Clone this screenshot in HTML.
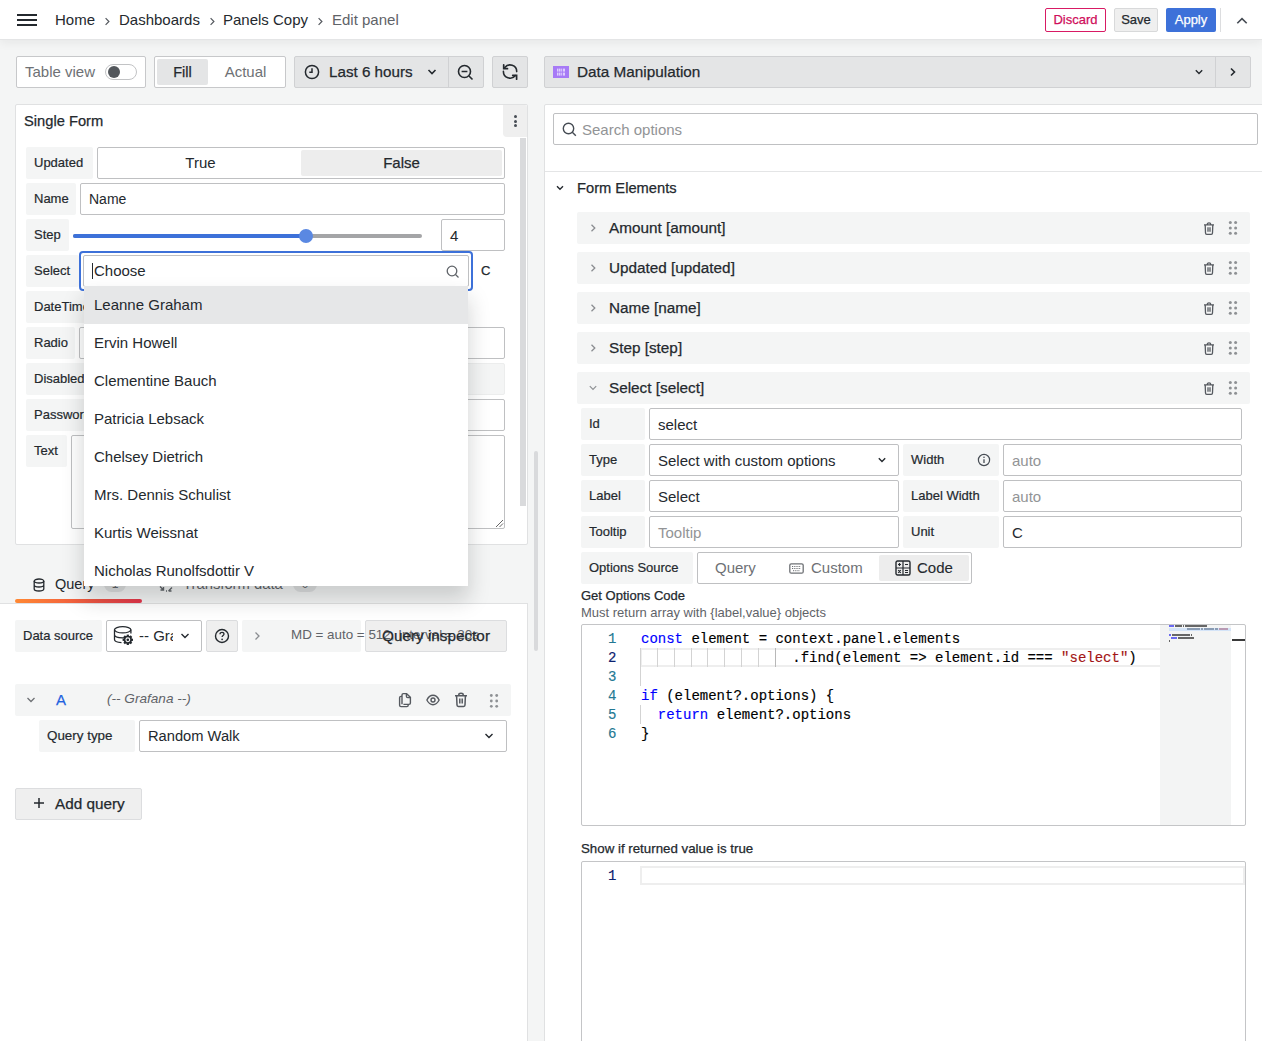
<!DOCTYPE html>
<html><head><meta charset="utf-8">
<style>
*{box-sizing:border-box;margin:0;padding:0}
html,body{width:1262px;height:1041px;overflow:hidden}
body{background:#f4f5f5;font-family:"Liberation Sans",sans-serif;color:#24292e;position:relative;font-size:14px}
.a{position:absolute}
.hdr{left:0;top:0;width:1262px;height:40px;background:#fff;border-bottom:1px solid #e4e5e6;box-shadow:0 2px 10px rgba(24,26,27,0.07)}
.bc{top:0;height:40px;line-height:40px;font-size:15px;white-space:nowrap}
.sep{width:5px;height:8px}
.btn{height:24px;line-height:22px;border-radius:2px;font-size:13px;text-align:center;white-space:nowrap;-webkit-text-stroke:0.25px currentColor}
.tb{height:32px;border:1px solid #d0d1d3;background:#e4e5e6;border-radius:2px}
.panel{background:#fff;border:1px solid #e0e1e2;border-radius:2px}
.lbl{height:32px;line-height:32px;background:#f4f5f5;border-radius:2px;font-size:13px;-webkit-text-stroke:0.2px currentColor;padding-left:8px;white-space:nowrap;overflow:hidden}
.inp{height:32px;line-height:31px;background:#fff;border:1px solid #bfc0c2;border-radius:2px;font-size:15px;padding-left:8px;white-space:nowrap;overflow:hidden}
.ph{color:#929496}
.row{height:32px;background:#f4f5f5;border-radius:2px}
.rt{font-size:14px;font-weight:700;line-height:32px;white-space:nowrap}
svg{display:block}
.m{-webkit-text-stroke:0.25px currentColor}
.code{font-family:"Liberation Mono",monospace;font-size:14px;line-height:19px;white-space:pre;-webkit-text-stroke:0.15px currentColor}
</style></head><body>

<!-- HEADER -->
<div class="a hdr"></div>
<div class="a" style="left:17px;top:14px;width:20px;height:2px;background:#24292e"></div>
<div class="a" style="left:17px;top:19px;width:20px;height:2px;background:#24292e"></div>
<div class="a" style="left:17px;top:24px;width:20px;height:2px;background:#24292e"></div>
<div class="a bc" style="left:55px">Home</div>
<svg class="a" style="left:104px;top:17px" width="7" height="9" viewBox="0 0 7 9"><path d="M1.6 1.2 L4.9 4.5 L1.6 7.8" fill="none" stroke="#55595f" stroke-width="1.2"/></svg>
<div class="a bc" style="left:119px">Dashboards</div>
<svg class="a" style="left:209px;top:17px" width="7" height="9" viewBox="0 0 7 9"><path d="M1.6 1.2 L4.9 4.5 L1.6 7.8" fill="none" stroke="#55595f" stroke-width="1.2"/></svg>
<div class="a bc" style="left:223px">Panels Copy</div>
<svg class="a" style="left:317px;top:17px" width="7" height="9" viewBox="0 0 7 9"><path d="M1.6 1.2 L4.9 4.5 L1.6 7.8" fill="none" stroke="#55595f" stroke-width="1.2"/></svg>
<div class="a bc" style="left:332px;color:#5f6368">Edit panel</div>

<div class="a btn" style="left:1045px;top:8px;width:61px;border:1px solid #d81a64;color:#cf0e5b;background:#fff">Discard</div>
<div class="a btn" style="left:1114px;top:8px;width:44px;border:1px solid #d8d9da;background:#efefef;">Save</div>
<div class="a btn" style="left:1166px;top:8px;width:50px;background:#3d71d9;color:#fff;line-height:24px">Apply</div>
<div class="a" style="left:1220px;top:8px;width:1px;height:24px;background:#dcdddf"></div>
<svg class="a" style="left:1235px;top:15px" width="14" height="10" viewBox="0 0 14 10"><path d="M2.3 8.3 L7 3.6 L11.7 8.3" fill="none" stroke="#464c54" stroke-width="1.6"/></svg>

<!-- TOOLBAR -->
<div class="a" style="left:16px;top:56px;width:130px;height:32px;background:#fff;border:1px solid #c7c8ca;border-radius:2px"></div>
<div class="a" style="left:25px;top:56px;line-height:32px;color:#6e7175;font-size:15px">Table view</div>
<div class="a" style="left:105px;top:64px;width:32px;height:16px;border:1px solid #c2c3c5;border-radius:8px;background:#fff"></div>
<div class="a" style="left:108px;top:66px;width:12px;height:12px;border-radius:6px;background:#53575c"></div>

<div class="a" style="left:154px;top:56px;width:132px;height:32px;background:#fff;border:1px solid #c7c8ca;border-radius:2px"></div>
<div class="a" style="left:157px;top:59px;width:51px;height:26px;background:#e4e5e6;border-radius:2px"></div>
<div class="a" style="left:157px;top:56px;width:51px;line-height:32px;text-align:center;font-size:14.5px;-webkit-text-stroke:0.25px #24292e">Fill</div>
<div class="a" style="left:208px;top:56px;width:75px;line-height:32px;text-align:center;color:#6e7175;font-size:15px">Actual</div>

<div class="a tb" style="left:294px;top:56px;width:190px"></div>
<div class="a" style="left:448px;top:57px;width:1px;height:30px;background:#d0d1d3"></div>
<svg class="a" style="left:304px;top:64px" width="16" height="16" viewBox="0 0 16 16"><circle cx="8" cy="8" r="6.6" fill="none" stroke="#24292e" stroke-width="1.5"/><path d="M8 4.2 V8.3 H5.3" fill="none" stroke="#24292e" stroke-width="1.5"/></svg>
<div class="a m" style="left:329px;top:56px;line-height:32px;font-size:15.2px">Last 6 hours</div>
<svg class="a" style="left:427px;top:68px" width="10" height="8" viewBox="0 0 10 8"><path d="M1.5 2 L5 5.5 L8.5 2" fill="none" stroke="#24292e" stroke-width="1.6"/></svg>
<svg class="a" style="left:457px;top:64px" width="17" height="17" viewBox="0 0 17 17"><circle cx="7.5" cy="7.5" r="6" fill="none" stroke="#24292e" stroke-width="1.6"/><path d="M4.6 7.5 H10.4 M12 12 L15.5 15.5" fill="none" stroke="#24292e" stroke-width="1.6"/></svg>
<div class="a tb" style="left:492px;top:56px;width:36px"></div>
<svg class="a" style="left:501px;top:63px" width="18" height="18" viewBox="0 0 18 18"><path d="M3.8 4.6 A6.6 6.6 0 0 1 15.7 8.6 M2.4 8.4 A6.7 6.7 0 0 0 14.4 12.6" fill="none" stroke="#24292e" stroke-width="1.6" stroke-linecap="round"/><path d="M2.7 1.8 V5.7 H6.5 M11.7 12.4 H15.6 V16.2" fill="none" stroke="#24292e" stroke-width="1.7" stroke-linecap="round"/></svg>

<div class="a tb" style="left:544px;top:56px;width:707px"></div>
<div class="a" style="left:1215px;top:57px;width:1px;height:30px;background:#d0d1d3"></div>
<svg class="a" style="left:553px;top:66px" width="16" height="12" viewBox="0 0 16 12"><rect width="16" height="12" fill="#a77af6"/><g fill="#e6d8ff" opacity="0.9"><rect x="4" y="2.6" width="1" height="3"/><rect x="5.5" y="2.6" width="2" height="3"/><rect x="8.2" y="2.6" width="1" height="3"/><rect x="10" y="2.6" width="2" height="3"/><rect x="4" y="6.6" width="1" height="3"/><rect x="5.5" y="6.6" width="2" height="3"/><rect x="8.2" y="6.6" width="1" height="3"/><rect x="10" y="6.6" width="2" height="3"/></g></svg>
<div class="a m" style="left:577px;top:56px;line-height:32px;font-size:15.3px">Data Manipulation</div>
<svg class="a" style="left:1194px;top:68px" width="10" height="8" viewBox="0 0 10 8"><path d="M1.8 2.2 L5 5.4 L8.2 2.2" fill="none" stroke="#24292e" stroke-width="1.4"/></svg>
<svg class="a" style="left:1229px;top:67px" width="8" height="10" viewBox="0 0 8 10"><path d="M2 1.5 L5.5 5 L2 8.5" fill="none" stroke="#24292e" stroke-width="1.6"/></svg>

<!-- LEFT PANEL -->
<div class="a panel" style="left:15px;top:104px;width:513px;height:441px"></div>
<div class="a m" style="left:24px;top:105px;line-height:33px;font-size:14.7px">Single Form</div>
<div class="a" style="left:503px;top:105px;width:24px;height:32px;background:#efefef;border-radius:0 2px 0 4px"></div>
<div class="a" style="left:513.5px;top:114.5px;width:3px;height:3px;border-radius:2px;background:#464c54"></div>
<div class="a" style="left:513.5px;top:119.5px;width:3px;height:3px;border-radius:2px;background:#464c54"></div>
<div class="a" style="left:513.5px;top:124px;width:3px;height:3px;border-radius:2px;background:#464c54"></div>
<div class="a" style="left:520px;top:138px;width:6px;height:368px;background:#d9dadc"></div>

<div class="a lbl" style="left:26px;top:147px;width:67px">Updated</div>
<div class="a" style="left:97px;top:147px;width:408px;height:32px;border:1px solid #bfc0c2;border-radius:2px;background:#fff"></div>
<div class="a" style="left:301px;top:150px;width:201px;height:26px;background:#ededed;border-radius:2px"></div>
<div class="a" style="left:100px;top:147px;width:201px;line-height:32px;text-align:center;font-size:15px">True</div>
<div class="a" style="left:301px;top:147px;width:201px;line-height:32px;text-align:center;font-size:15px;-webkit-text-stroke:0.25px #24292e">False</div>

<div class="a lbl" style="left:26px;top:183px;width:50px">Name</div>
<div class="a inp" style="left:80px;top:183px;width:425px;padding-left:8px;font-size:14px">Name</div>

<div class="a lbl" style="left:26px;top:219px;width:43px">Step</div>
<div class="a" style="left:73px;top:234px;width:349px;height:4px;border-radius:2px;background:#a4a5a7"></div>
<div class="a" style="left:73px;top:234px;width:233px;height:4px;border-radius:2px;background:#3d71d9"></div>
<div class="a" style="left:299px;top:229px;width:14px;height:14px;border-radius:7px;background:#5a88e2"></div>
<div class="a inp" style="left:441px;top:219px;width:64px">4</div>

<div class="a lbl" style="left:26px;top:255px;width:53px">Select</div>
<div class="a" style="left:79px;top:251px;width:394px;height:40px;border:2px solid #3d71d9;border-radius:4px;background:#fff"></div>
<div class="a" style="left:83px;top:255px;width:386px;height:32px;border:1px solid #bfc0c2;border-radius:2px;background:#fff"></div>
<div class="a" style="left:92px;top:263px;width:1px;height:16px;background:#24292e"></div>
<div class="a" style="left:94px;top:255px;line-height:32px;font-size:15px">Choose</div>
<svg class="a" style="left:446px;top:265px" width="14" height="14" viewBox="0 0 14 14"><circle cx="6" cy="6" r="4.8" fill="none" stroke="#5f6368" stroke-width="1.3"/><path d="M9.5 9.5 L12.5 12.5" stroke="#5f6368" stroke-width="1.3"/></svg>
<div class="a m" style="left:481px;top:255px;line-height:32px;font-size:13px">C</div>

<div class="a lbl" style="left:26px;top:291px;width:70px">DateTime</div>

<div class="a lbl" style="left:26px;top:327px;width:49px">Radio</div>
<div class="a inp" style="left:79px;top:327px;width:426px"></div>

<div class="a lbl" style="left:26px;top:363px;width:66px">Disabled</div>
<div class="a" style="left:96px;top:363px;width:409px;height:32px;background:#f4f5f5;border:1px solid #eceded;border-radius:2px"></div>

<div class="a lbl" style="left:26px;top:399px;width:73px">Password</div>
<div class="a inp" style="left:103px;top:399px;width:402px"></div>

<div class="a lbl" style="left:26px;top:435px;width:41px">Text</div>
<div class="a" style="left:71px;top:435px;width:434px;height:94px;border:1px solid #bfc0c2;border-radius:2px;background:#fff"></div>
<svg class="a" style="left:495px;top:519px" width="9" height="9" viewBox="0 0 9 9"><path d="M1 8 L8 1 M4.5 8 L8 4.5" stroke="#555" stroke-width="0.9"/></svg>

<!-- TABS -->
<svg class="a" style="left:33px;top:578px" width="12" height="14" viewBox="0 0 12 14"><ellipse cx="6" cy="3" rx="4.8" ry="2" fill="none" stroke="#24292e" stroke-width="1.3"/><path d="M1.2 3 V11 C1.2 12.2 3.3 13 6 13 C8.7 13 10.8 12.2 10.8 11 V3 M1.2 7 C1.2 8.2 3.3 9 6 9 C8.7 9 10.8 8.2 10.8 7" fill="none" stroke="#24292e" stroke-width="1.3"/></svg>
<div class="a" style="left:55px;top:572px;line-height:24px;font-size:14.5px">Query</div>
<div class="a" style="left:104px;top:577px;width:22px;height:15px;border-radius:8px;background:#dfe0e1;font-size:12px;line-height:15px;text-align:center;color:#5f6368">1</div>
<svg class="a" style="left:158px;top:577px" width="16" height="16" viewBox="0 0 16 16"><path d="M2 9.5 L5.5 13 M5.5 10 V13 H2.5 M14 10.5 L10.5 14 M10.5 14 H13.5 M8 14 H9" fill="none" stroke="#5f6368" stroke-width="1.4"/></svg>
<div class="a" style="left:183px;top:572px;line-height:24px;font-size:14.8px;color:#5f6368">Transform data</div>
<div class="a" style="left:293px;top:577px;width:24px;height:15px;border-radius:8px;background:#dfe0e1;font-size:12px;line-height:15px;text-align:center;color:#5f6368">0</div>
<div class="a" style="left:15px;top:599px;width:127px;height:4px;border-radius:2px;background:linear-gradient(90deg,#ff8833,#e3344a)"></div>

<!-- QUERY PANE -->
<div class="a panel" style="left:-2px;top:603px;width:530px;height:460px;border-radius:0"></div>
<div class="a lbl" style="left:15px;top:620px;width:87px">Data source</div>
<div class="a inp" style="left:106px;top:620px;width:96px"></div>
<svg class="a" style="left:113px;top:625px" width="22" height="22" viewBox="0 0 22 22"><ellipse cx="9.7" cy="4.8" rx="8.2" ry="3.1" fill="none" stroke="#24292e" stroke-width="1.3"/><path d="M1.5 4.8 V14.5 C1.5 16.2 4.5 17.4 8.5 17.6 M17.9 4.8 V8.5 M1.5 9.8 C1.5 11.5 5 12.8 9.7 12.8 C10.5 12.8 11.2 12.8 11.8 12.7" fill="none" stroke="#24292e" stroke-width="1.3"/><g fill="#24292e"><rect x="13.7" y="9.6" width="2.2" height="10.4" transform="rotate(0 14.8 14.8)"/><rect x="13.7" y="9.6" width="2.2" height="10.4" transform="rotate(45 14.8 14.8)"/><rect x="13.7" y="9.6" width="2.2" height="10.4" transform="rotate(90 14.8 14.8)"/><rect x="13.7" y="9.6" width="2.2" height="10.4" transform="rotate(135 14.8 14.8)"/><circle cx="14.8" cy="14.8" r="4.1"/></g><circle cx="14.8" cy="14.8" r="1.9" fill="none" stroke="#fff" stroke-width="1.1"/></svg>
<div class="a" style="left:139px;top:620px;width:34px;line-height:32px;font-size:15px;overflow:hidden;white-space:nowrap">-- Grafana --</div>
<svg class="a" style="left:180px;top:632px" width="10" height="8" viewBox="0 0 10 8"><path d="M1.5 2 L5 5.5 L8.5 2" fill="none" stroke="#24292e" stroke-width="1.4"/></svg>
<div class="a" style="left:206px;top:620px;width:32px;height:32px;background:#efefef;border:1px solid #dcdddf;border-radius:2px"></div>
<svg class="a" style="left:214px;top:628px" width="16" height="16" viewBox="0 0 16 16"><circle cx="8" cy="8" r="6.5" fill="none" stroke="#24292e" stroke-width="1.4"/><path d="M6 6.2 C6 4.9 7 4.3 8 4.3 C9.1 4.3 10 5 10 6.1 C10 7.5 8.1 7.5 8.1 9" fill="none" stroke="#24292e" stroke-width="1.3"/><circle cx="8.1" cy="11.3" r="0.85" fill="#24292e"/></svg>
<div class="a" style="left:242px;top:620px;width:119px;height:32px;background:#f4f5f5;border-radius:2px"></div>
<svg class="a" style="left:254px;top:631px" width="7" height="10" viewBox="0 0 7 10"><path d="M1.5 1.5 L5 5 L1.5 8.5" fill="none" stroke="#8a8d91" stroke-width="1.3"/></svg>
<div class="a" style="left:365px;top:620px;width:142px;height:32px;background:#efefef;border:1px solid #dcdddf;border-radius:2px"></div>
<div class="a" style="left:291px;top:620px;line-height:30px;font-size:13.4px;color:#5f6368;white-space:nowrap">MD = auto = 512, Interval = 20s</div>
<div class="a" style="left:365px;top:620px;width:142px;line-height:32px;text-align:center;font-size:15.3px;-webkit-text-stroke:0.25px #24292e;color:#24292e">Query inspector</div>

<div class="a" style="left:15px;top:684px;width:496px;height:32px;background:#f4f5f5;border-radius:2px"></div>
<svg class="a" style="left:26px;top:696px" width="10" height="8" viewBox="0 0 10 8"><path d="M1.5 2 L5 5.5 L8.5 2" fill="none" stroke="#6e7175" stroke-width="1.3"/></svg>
<div class="a" style="left:56px;top:684px;line-height:32px;font-size:15px;-webkit-text-stroke:0.25px #1f62e0;color:#1f62e0">A</div>
<div class="a" style="left:107px;top:684px;line-height:30px;font-size:13.6px;font-style:italic;color:#5f6368">(-- Grafana --)</div>
<svg class="a" style="left:398px;top:692px" width="14" height="16" viewBox="0 0 14 16"><path d="M4 12.2 V3 C4 2.2 4.6 1.6 5.4 1.6 H8.6 L12.4 5.4 V11 C12.4 11.8 11.8 12.4 11 12.4 H5.4 M8.4 1.8 V4.2 C8.4 5 9 5.6 9.8 5.6 H12.2 M4 4.4 H3 C2.2 4.4 1.6 5 1.6 5.8 V13.2 C1.6 14 2.2 14.6 3 14.6 H8.8 C9.6 14.6 10.2 14 10.2 13.2 V12.4" fill="none" stroke="#55595f" stroke-width="1.4"/></svg>
<svg class="a" style="left:426px;top:694px" width="14" height="12" viewBox="0 0 14 12"><path d="M0.9 6 C2.6 2.6 4.8 1.3 7 1.3 C9.2 1.3 11.4 2.6 13.1 6 C11.4 9.4 9.2 10.7 7 10.7 C4.8 10.7 2.6 9.4 0.9 6 Z" fill="none" stroke="#55595f" stroke-width="1.4"/><circle cx="7" cy="6" r="2" fill="none" stroke="#55595f" stroke-width="1.4"/></svg>
<svg class="a" style="left:454px;top:692px" width="14" height="16" viewBox="0 0 14 16"><path d="M1 3.8 H13 M4.8 3.8 V2.8 C4.8 1.8 5.6 1.2 7 1.2 C8.4 1.2 9.2 1.8 9.2 2.8 V3.8 M2.6 3.8 L3 13 C3 13.8 3.6 14.4 4.4 14.4 H9.6 C10.4 14.4 11 13.8 11 13 L11.4 3.8 M5.8 6.6 V11.4 M8.2 6.6 V11.4" fill="none" stroke="#55595f" stroke-width="1.5"/></svg>
<svg class="a" style="left:488px;top:693px" width="12" height="16" viewBox="0 0 12 16"><g fill="#8e9194"><circle cx="3.3" cy="2.5" r="1.4"/><circle cx="8.7" cy="2.5" r="1.4"/><circle cx="3.3" cy="8" r="1.4"/><circle cx="8.7" cy="8" r="1.4"/><circle cx="3.3" cy="13.3" r="1.4"/><circle cx="8.7" cy="13.3" r="1.4"/></g></svg>

<div class="a lbl" style="left:39px;top:720px;width:96px;font-size:13.4px">Query type</div>
<div class="a inp" style="left:139px;top:720px;width:368px;font-size:14.7px">Random Walk</div>
<svg class="a" style="left:484px;top:732px" width="10" height="8" viewBox="0 0 10 8"><path d="M1.5 2 L5 5.5 L8.5 2" fill="none" stroke="#24292e" stroke-width="1.4"/></svg>

<div class="a" style="left:15px;top:788px;width:127px;height:32px;background:#efefef;border:1px solid #dcdddf;border-radius:2px"></div>
<svg class="a" style="left:33px;top:797px" width="12" height="12" viewBox="0 0 12 12"><path d="M6 1 V11 M1 6 H11" stroke="#24292e" stroke-width="1.5"/></svg>
<div class="a m" style="left:55px;top:788px;line-height:32px;font-size:15.3px">Add query</div>

<div class="a" style="left:534px;top:451px;width:4px;height:200px;border-radius:2px;background:#d9dadc"></div>

<!-- RIGHT PANE -->
<div class="a panel" style="left:544px;top:104px;width:740px;height:960px"></div>
<div class="a inp" style="left:553px;top:113px;width:705px"></div>
<svg class="a" style="left:561.5px;top:122px" width="15" height="15" viewBox="0 0 15 15"><circle cx="6.5" cy="6.5" r="5.2" fill="none" stroke="#464c54" stroke-width="1.4"/><path d="M10.3 10.3 L13.8 13.8" stroke="#464c54" stroke-width="1.4"/></svg>
<div class="a ph" style="left:582px;top:114px;line-height:32px;font-size:15px">Search options</div>
<div class="a" style="left:545px;top:171px;width:720px;height:1px;background:#e4e5e6"></div>
<svg class="a" style="left:555px;top:184px" width="10" height="8" viewBox="0 0 10 8"><path d="M2 2.2 L5 5.2 L8 2.2" fill="none" stroke="#24292e" stroke-width="1.4"/></svg>
<div class="a m" style="left:577px;top:172px;line-height:33px;font-size:14.7px">Form Elements</div>
<div class="a row" style="left:577px;top:212px;width:673px"></div>
<svg class="a" style="left:589px;top:223px" width="8" height="10" viewBox="0 0 8 10"><path d="M2.5 1.8 L5.8 5 L2.5 8.2" fill="none" stroke="#8a8d91" stroke-width="1.3"/></svg>
<div class="a m" style="left:609px;top:212px;line-height:32px;font-size:15.3px">Amount [amount]</div>
<svg class="a" style="left:1202px;top:221px" width="14" height="15" viewBox="0 0 14 15"><path d="M2 3.9 H12 M5.3 3.9 V3.2 C5.3 2.3 6 1.8 7 1.8 C8 1.8 8.7 2.3 8.7 3.2 V3.9 M3.2 3.9 L3.5 12 C3.5 12.8 4 13.3 4.8 13.3 H9.2 C10 13.3 10.5 12.8 10.5 12 L10.8 3.9 M6 6.3 V10.7 M8 6.3 V10.7" fill="none" stroke="#55595f" stroke-width="1.3"/></svg>
<svg class="a" style="left:1227px;top:220px" width="12" height="16" viewBox="0 0 12 16"><g fill="#8e9194"><circle cx="3.3" cy="2.6" r="1.5"/><circle cx="8.6" cy="2.6" r="1.5"/><circle cx="3.3" cy="8" r="1.5"/><circle cx="8.6" cy="8" r="1.5"/><circle cx="3.3" cy="13.3" r="1.5"/><circle cx="8.6" cy="13.3" r="1.5"/></g></svg>
<div class="a row" style="left:577px;top:252px;width:673px"></div>
<svg class="a" style="left:589px;top:263px" width="8" height="10" viewBox="0 0 8 10"><path d="M2.5 1.8 L5.8 5 L2.5 8.2" fill="none" stroke="#8a8d91" stroke-width="1.3"/></svg>
<div class="a m" style="left:609px;top:252px;line-height:32px;font-size:15.3px">Updated [updated]</div>
<svg class="a" style="left:1202px;top:261px" width="14" height="15" viewBox="0 0 14 15"><path d="M2 3.9 H12 M5.3 3.9 V3.2 C5.3 2.3 6 1.8 7 1.8 C8 1.8 8.7 2.3 8.7 3.2 V3.9 M3.2 3.9 L3.5 12 C3.5 12.8 4 13.3 4.8 13.3 H9.2 C10 13.3 10.5 12.8 10.5 12 L10.8 3.9 M6 6.3 V10.7 M8 6.3 V10.7" fill="none" stroke="#55595f" stroke-width="1.3"/></svg>
<svg class="a" style="left:1227px;top:260px" width="12" height="16" viewBox="0 0 12 16"><g fill="#8e9194"><circle cx="3.3" cy="2.6" r="1.5"/><circle cx="8.6" cy="2.6" r="1.5"/><circle cx="3.3" cy="8" r="1.5"/><circle cx="8.6" cy="8" r="1.5"/><circle cx="3.3" cy="13.3" r="1.5"/><circle cx="8.6" cy="13.3" r="1.5"/></g></svg>
<div class="a row" style="left:577px;top:292px;width:673px"></div>
<svg class="a" style="left:589px;top:303px" width="8" height="10" viewBox="0 0 8 10"><path d="M2.5 1.8 L5.8 5 L2.5 8.2" fill="none" stroke="#8a8d91" stroke-width="1.3"/></svg>
<div class="a m" style="left:609px;top:292px;line-height:32px;font-size:15.3px">Name [name]</div>
<svg class="a" style="left:1202px;top:301px" width="14" height="15" viewBox="0 0 14 15"><path d="M2 3.9 H12 M5.3 3.9 V3.2 C5.3 2.3 6 1.8 7 1.8 C8 1.8 8.7 2.3 8.7 3.2 V3.9 M3.2 3.9 L3.5 12 C3.5 12.8 4 13.3 4.8 13.3 H9.2 C10 13.3 10.5 12.8 10.5 12 L10.8 3.9 M6 6.3 V10.7 M8 6.3 V10.7" fill="none" stroke="#55595f" stroke-width="1.3"/></svg>
<svg class="a" style="left:1227px;top:300px" width="12" height="16" viewBox="0 0 12 16"><g fill="#8e9194"><circle cx="3.3" cy="2.6" r="1.5"/><circle cx="8.6" cy="2.6" r="1.5"/><circle cx="3.3" cy="8" r="1.5"/><circle cx="8.6" cy="8" r="1.5"/><circle cx="3.3" cy="13.3" r="1.5"/><circle cx="8.6" cy="13.3" r="1.5"/></g></svg>
<div class="a row" style="left:577px;top:332px;width:673px"></div>
<svg class="a" style="left:589px;top:343px" width="8" height="10" viewBox="0 0 8 10"><path d="M2.5 1.8 L5.8 5 L2.5 8.2" fill="none" stroke="#8a8d91" stroke-width="1.3"/></svg>
<div class="a m" style="left:609px;top:332px;line-height:32px;font-size:15.3px">Step [step]</div>
<svg class="a" style="left:1202px;top:341px" width="14" height="15" viewBox="0 0 14 15"><path d="M2 3.9 H12 M5.3 3.9 V3.2 C5.3 2.3 6 1.8 7 1.8 C8 1.8 8.7 2.3 8.7 3.2 V3.9 M3.2 3.9 L3.5 12 C3.5 12.8 4 13.3 4.8 13.3 H9.2 C10 13.3 10.5 12.8 10.5 12 L10.8 3.9 M6 6.3 V10.7 M8 6.3 V10.7" fill="none" stroke="#55595f" stroke-width="1.3"/></svg>
<svg class="a" style="left:1227px;top:340px" width="12" height="16" viewBox="0 0 12 16"><g fill="#8e9194"><circle cx="3.3" cy="2.6" r="1.5"/><circle cx="8.6" cy="2.6" r="1.5"/><circle cx="3.3" cy="8" r="1.5"/><circle cx="8.6" cy="8" r="1.5"/><circle cx="3.3" cy="13.3" r="1.5"/><circle cx="8.6" cy="13.3" r="1.5"/></g></svg>
<div class="a row" style="left:577px;top:372px;width:673px"></div>
<svg class="a" style="left:588px;top:384px" width="10" height="8" viewBox="0 0 10 8"><path d="M1.8 2.2 L5 5.4 L8.2 2.2" fill="none" stroke="#8e9194" stroke-width="1.2"/></svg>
<div class="a m" style="left:609px;top:372px;line-height:32px;font-size:15.3px">Select [select]</div>
<svg class="a" style="left:1202px;top:381px" width="14" height="15" viewBox="0 0 14 15"><path d="M2 3.9 H12 M5.3 3.9 V3.2 C5.3 2.3 6 1.8 7 1.8 C8 1.8 8.7 2.3 8.7 3.2 V3.9 M3.2 3.9 L3.5 12 C3.5 12.8 4 13.3 4.8 13.3 H9.2 C10 13.3 10.5 12.8 10.5 12 L10.8 3.9 M6 6.3 V10.7 M8 6.3 V10.7" fill="none" stroke="#55595f" stroke-width="1.3"/></svg>
<svg class="a" style="left:1227px;top:380px" width="12" height="16" viewBox="0 0 12 16"><g fill="#8e9194"><circle cx="3.3" cy="2.6" r="1.5"/><circle cx="8.6" cy="2.6" r="1.5"/><circle cx="3.3" cy="8" r="1.5"/><circle cx="8.6" cy="8" r="1.5"/><circle cx="3.3" cy="13.3" r="1.5"/><circle cx="8.6" cy="13.3" r="1.5"/></g></svg>
<div class="a lbl" style="left:581px;top:408px;width:64px">Id</div>
<div class="a inp" style="left:649px;top:408px;width:593px">select</div>
<div class="a lbl" style="left:581px;top:444px;width:64px">Type</div>
<div class="a inp" style="left:649px;top:444px;width:250px">Select with custom options</div>
<svg class="a" style="left:877px;top:456px" width="10" height="8" viewBox="0 0 10 8"><path d="M1.8 2.2 L5 5.4 L8.2 2.2" fill="none" stroke="#24292e" stroke-width="1.4"/></svg>
<div class="a lbl" style="left:903px;top:444px;width:96px">Width</div>
<svg class="a" style="left:977px;top:453px" width="14" height="14" viewBox="0 0 14 14"><circle cx="7" cy="7" r="5.6" fill="none" stroke="#464c54" stroke-width="1.2"/><path d="M7 6.2 V10" stroke="#464c54" stroke-width="1.3"/><circle cx="7" cy="4.3" r="0.8" fill="#464c54"/></svg>
<div class="a inp ph" style="left:1003px;top:444px;width:239px">auto</div>
<div class="a lbl" style="left:581px;top:480px;width:64px">Label</div>
<div class="a inp" style="left:649px;top:480px;width:250px">Select</div>
<div class="a lbl" style="left:903px;top:480px;width:96px">Label Width</div>
<div class="a inp ph" style="left:1003px;top:480px;width:239px">auto</div>
<div class="a lbl" style="left:581px;top:516px;width:64px">Tooltip</div>
<div class="a inp ph" style="left:649px;top:516px;width:250px">Tooltip</div>
<div class="a lbl" style="left:903px;top:516px;width:96px">Unit</div>
<div class="a inp" style="left:1003px;top:516px;width:239px">C</div>
<div class="a lbl" style="left:581px;top:552px;width:112px">Options Source</div>
<div class="a" style="left:697px;top:552px;width:275px;height:32px;border:1px solid #bfc0c2;border-radius:2px;background:#fff"></div>
<div class="a" style="left:879px;top:555px;width:90px;height:26px;background:#ededed;border-radius:2px"></div>
<div class="a" style="left:715px;top:552px;line-height:32px;font-size:15px;color:#6e7175">Query</div>
<svg class="a" style="left:789px;top:563px" width="15" height="11" viewBox="0 0 15 11"><rect x="0.8" y="0.8" width="13.4" height="9.4" rx="1.5" fill="none" stroke="#6e7175" stroke-width="1.3"/><path d="M3 3.5 H12 M3 5.5 H12 M4 7.7 H11" stroke="#6e7175" stroke-width="1" stroke-dasharray="1 0.8"/></svg>
<div class="a" style="left:811px;top:552px;line-height:32px;font-size:15px;color:#6e7175">Custom</div>
<svg class="a" style="left:895px;top:560px" width="16" height="16" viewBox="0 0 16 16"><rect x="1" y="1" width="14" height="14" rx="1.5" fill="none" stroke="#24292e" stroke-width="1.4"/><path d="M8 1 V15 M1 8 H15 M3 4.5 H6 M4.5 3 V6 M10 4.5 H13 M3.2 10.2 L5.8 12.8 M5.8 10.2 L3.2 12.8 M10 10.5 H13 M10 12.5 H13" stroke="#24292e" stroke-width="1.2"/></svg>
<div class="a" style="left:917px;top:552px;line-height:32px;font-size:15px;-webkit-text-stroke:0.1px #24292e">Code</div>
<div class="a m" style="left:581px;top:588px;line-height:16px;font-size:13px">Get Options Code</div>
<div class="a" style="left:581px;top:605px;line-height:16px;font-size:13px;color:#5f6368">Must return array with {label,value} objects</div>
<div class="a" style="left:581px;top:624px;width:665px;height:202px;border:1px solid #c4c5c7;border-radius:2px;background:#fff;overflow:hidden"></div>
<div class="a" style="left:1160px;top:625px;width:71px;height:200px;background:#f3f4f4"></div>
<div class="a" style="left:640px;top:648px;width:520px;height:19px;border:2px solid #eeeeee;border-right:none"></div>
<div class="a" style="left:1232px;top:639px;width:13px;height:2px;background:#3a3a3a"></div>
<div class="a" style="left:1169px;top:625px;width:5px;height:2px;background:#6a6af0"></div>
<div class="a" style="left:1175px;top:625px;width:7px;height:2px;background:#666"></div>
<div class="a" style="left:1183px;top:625px;width:1px;height:2px;background:#666"></div>
<div class="a" style="left:1185px;top:625px;width:22px;height:2px;background:#666"></div>
<div class="a" style="left:1169px;top:628px;width:62px;height:3px;background:#d4e4f8"></div>
<div class="a" style="left:1187px;top:628px;width:13px;height:2px;background:#8a9cb4"></div>
<div class="a" style="left:1201px;top:628px;width:2px;height:2px;background:#8a9cb4"></div>
<div class="a" style="left:1204px;top:628px;width:10px;height:2px;background:#8a9cb4"></div>
<div class="a" style="left:1215px;top:628px;width:3px;height:2px;background:#8a9cb4"></div>
<div class="a" style="left:1219px;top:628px;width:9px;height:2px;background:#b89ab4"></div>
<div class="a" style="left:1169px;top:634px;width:2px;height:2px;background:#6a6af0"></div>
<div class="a" style="left:1172px;top:634px;width:18px;height:2px;background:#666"></div>
<div class="a" style="left:1191px;top:634px;width:1px;height:2px;background:#666"></div>
<div class="a" style="left:1171px;top:637px;width:6px;height:2px;background:#6a6af0"></div>
<div class="a" style="left:1178px;top:637px;width:16px;height:2px;background:#666"></div>
<div class="a" style="left:1169px;top:640px;width:1px;height:2px;background:#666"></div>
<div class="a" style="left:640px;top:648px;width:1px;height:19px;background:#d3d3d3"></div>
<div class="a" style="left:657px;top:648px;width:1px;height:19px;background:#d3d3d3"></div>
<div class="a" style="left:674px;top:648px;width:1px;height:19px;background:#d3d3d3"></div>
<div class="a" style="left:691px;top:648px;width:1px;height:19px;background:#d3d3d3"></div>
<div class="a" style="left:707px;top:648px;width:1px;height:19px;background:#d3d3d3"></div>
<div class="a" style="left:724px;top:648px;width:1px;height:19px;background:#d3d3d3"></div>
<div class="a" style="left:741px;top:648px;width:1px;height:19px;background:#d3d3d3"></div>
<div class="a" style="left:758px;top:648px;width:1px;height:19px;background:#d3d3d3"></div>
<div class="a" style="left:775px;top:648px;width:1px;height:19px;background:#b8b8b8"></div>
<div class="a" style="left:640px;top:667px;width:1px;height:19px;background:#d3d3d3"></div>
<div class="a" style="left:640px;top:705px;width:1px;height:19px;background:#d3d3d3"></div>
<div class="a code" style="left:608px;top:630px;color:#237893">1</div>
<div class="a code" style="left:608px;top:649px;color:#0b216f">2</div>
<div class="a code" style="left:608px;top:668px;color:#237893">3</div>
<div class="a code" style="left:608px;top:687px;color:#237893">4</div>
<div class="a code" style="left:608px;top:706px;color:#237893">5</div>
<div class="a code" style="left:608px;top:725px;color:#237893">6</div>
<div class="a code" style="left:641px;top:630px;color:#000"><span style="color:#0000ff">const</span> element = context.panel.elements</div>
<div class="a code" style="left:641px;top:649px;color:#000">                  .find(element =&gt; element.id === <span style="color:#a31515">"select"</span>)</div>
<div class="a code" style="left:641px;top:668px;color:#000"></div>
<div class="a code" style="left:641px;top:687px;color:#000"><span style="color:#0000ff">if</span> (element?.options) {</div>
<div class="a code" style="left:641px;top:706px;color:#000">  <span style="color:#0000ff">return</span> element?.options</div>
<div class="a code" style="left:641px;top:725px;color:#000">}</div>
<div class="a m" style="left:581px;top:841px;line-height:16px;font-size:13.3px">Show if returned value is true</div>
<div class="a" style="left:581px;top:861px;width:665px;height:200px;border:1px solid #c4c5c7;border-radius:2px;background:#fff"></div>
<div class="a" style="left:640px;top:866px;width:605px;height:19px;border:2px solid #eeeeee"></div>
<div class="a code" style="left:608px;top:867px;color:#0b216f">1</div>

<!--DROPDOWN-->

<!-- DROPDOWN -->
<div class="a" style="left:84px;top:286px;width:384px;height:300px;background:#fff;box-shadow:0px 13px 20px 1px rgba(24,26,27,0.18);overflow:hidden">
<div style="position:absolute;left:0;top:0px;width:384px;height:38px;background:#e6e7e8;line-height:38px;padding-left:10px;font-size:15px;white-space:nowrap">Leanne Graham</div>
<div style="position:absolute;left:0;top:38px;width:384px;height:38px;line-height:38px;padding-left:10px;font-size:15px;white-space:nowrap">Ervin Howell</div>
<div style="position:absolute;left:0;top:76px;width:384px;height:38px;line-height:38px;padding-left:10px;font-size:15px;white-space:nowrap">Clementine Bauch</div>
<div style="position:absolute;left:0;top:114px;width:384px;height:38px;line-height:38px;padding-left:10px;font-size:15px;white-space:nowrap">Patricia Lebsack</div>
<div style="position:absolute;left:0;top:152px;width:384px;height:38px;line-height:38px;padding-left:10px;font-size:15px;white-space:nowrap">Chelsey Dietrich</div>
<div style="position:absolute;left:0;top:190px;width:384px;height:38px;line-height:38px;padding-left:10px;font-size:15px;white-space:nowrap">Mrs. Dennis Schulist</div>
<div style="position:absolute;left:0;top:228px;width:384px;height:38px;line-height:38px;padding-left:10px;font-size:15px;white-space:nowrap">Kurtis Weissnat</div>
<div style="position:absolute;left:0;top:266px;width:384px;height:38px;line-height:38px;padding-left:10px;font-size:15px;white-space:nowrap">Nicholas Runolfsdottir V</div>
</div>
</body></html>
